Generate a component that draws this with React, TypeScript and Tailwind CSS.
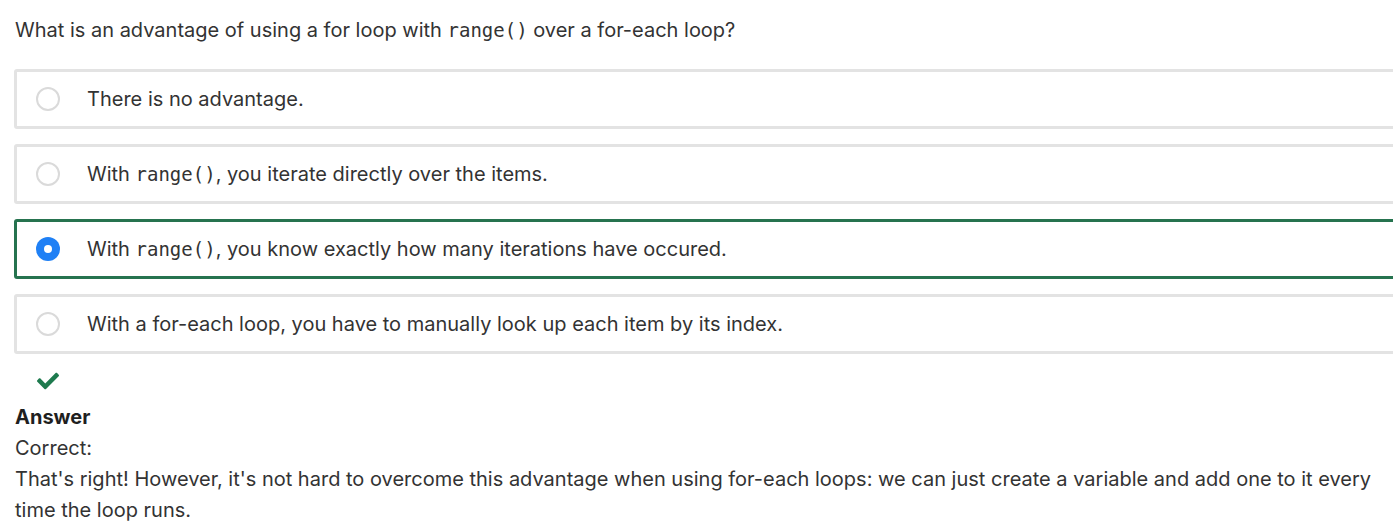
import React from 'react';
import { FaCheck } from 'react-icons/fa';

const options = [
  { id: 'a', parts: ['There is no advantage.'] },
  { id: 'b', parts: ['With ', 'range()', ', you iterate directly over the items.'] },
  { id: 'c', parts: ['With ', 'range()', ', you know exactly how many iterations have occured.'] },
  { id: 'd', parts: ['With a for-each loop, you have to manually look up each item by its index.'] },
];

const selected = 'c';

function Code({ children }: { children: React.ReactNode }) {
  return <code className="font-[family-name:'DejaVu_Sans_Mono',monospace] text-[19px]">{children}</code>;
}

function Radio({ checked }: { checked: boolean }) {
  if (checked) {
    return (
      <span className="flex h-6 w-6 shrink-0 items-center justify-center rounded-full bg-[#1f80f5]">
        <span className="h-2 w-2 rounded-full bg-white" />
      </span>
    );
  }
  return <span className="h-6 w-6 shrink-0 rounded-full border-2 border-[#dadada] bg-white" />;
}

export default function App() {
  return (
    <div className="w-full overflow-hidden bg-white font-[family-name:Inter,'Open_Sans',sans-serif] text-[20px] text-[#333333]">
      <div className="pl-[14px] pt-[15px]">
        <p className="pl-px leading-[31px]">
          What is an advantage of using a for loop with <Code>range()</Code> over a for-each loop?
        </p>

        {/* answer options */}
        <div className="mt-[23px] flex w-[1400px] flex-col gap-[15px]">
          {options.map((opt) => {
            const isSel = opt.id === selected;
            return (
              <div
                key={opt.id}
                className={`flex h-[60px] items-center rounded-[3px] border-[3px] pl-[19px] ${
                  isSel ? 'border-[#26734f]' : 'border-[#e3e3e3]'
                }`}
              >
                <Radio checked={isSel} />
                <span className="ml-[27px] whitespace-nowrap">
                  {opt.parts.map((p, i) => (p === 'range()' ? <Code key={i}>{p}</Code> : <span key={i}>{p}</span>))}
                </span>
              </div>
            );
          })}
        </div>

        {/* feedback */}
        <div className="ml-[23px] mt-[18px] flex h-[17px] items-center">
          <FaCheck className="h-[22px] w-[22px] text-[#1e7a4e]" />
        </div>
        <div className="mt-[13px] pl-px leading-[31px]">
          <div className="font-bold text-[#1f1f1f]">Answer</div>
          <div>Correct:</div>
          <p className="pr-[20px]">
            That's right! However, it's not hard to overcome this advantage when using for-each loops: we can just create a
            variable and add one to it every time the loop runs.
          </p>
        </div>
      </div>
    </div>
  );
}
